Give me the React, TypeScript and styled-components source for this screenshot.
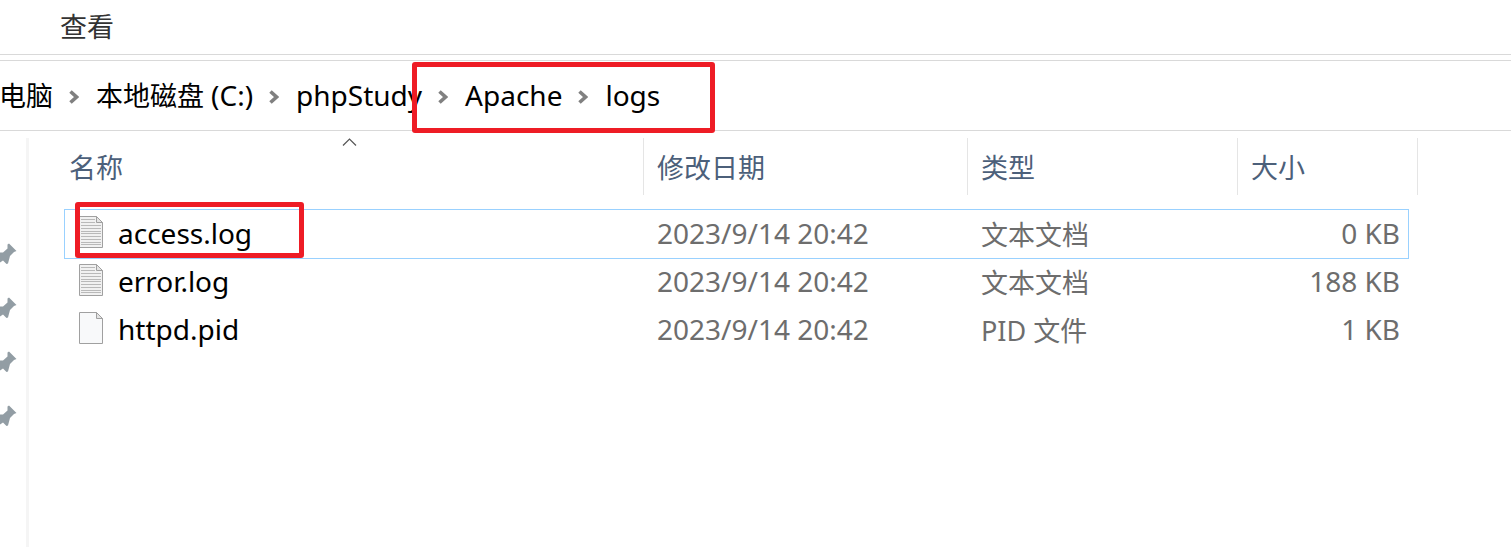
import React from "react";
import styled, { createGlobalStyle, css } from "styled-components";

const GlobalStyle = createGlobalStyle`
  *, *::before, *::after { box-sizing: border-box; }
  body {
    margin: 0;
    background: #fff;
    color: #000;
    font-family: "Noto Sans", "Noto Sans CJK SC", sans-serif;
    font-size: 27px;
    line-height: 36px;
  }
`;

const Window = styled.div`
  display: flex;
  flex-direction: column;
  min-height: 100vh;
  overflow: hidden;
`;

const TabBar = styled.nav`
  display: flex;
  align-items: center;
  height: 55px;
  padding-left: 60px;
  border-bottom: 1px solid #d9d9d9;
`;

const Tab = styled.button`
  padding: 0;
  border: 0;
  background: none;
  color: #333;
  font: inherit;
`;

const AddressBar = styled.nav`
  display: flex;
  align-items: center;
  height: 71px;
  margin-top: 5px;
  border-top: 1px solid #d9d9d9;
  border-bottom: 1px solid #d9d9d9;
  white-space: nowrap;
`;

const Crumb = styled.a<{ $clipped?: boolean }>`
  color: #000;
  text-decoration: none;
  margin-left: ${(p) => (p.$clipped ? "-1px" : "0")};
`;

const Latin = styled.span`
  font-size: 28px;
`;

const Separator = styled.svg`
  flex: none;
  width: 10px;
  height: 14px;
  margin: 2px 17px 0 16px;
`;

const highlight = css`
  content: "";
  position: absolute;
  border: 5px solid #ee1c25;
  border-radius: 3px;
  pointer-events: none;
`;

const MarkedCrumbs = styled.span`
  position: relative;
  display: flex;
  align-items: center;

  &::after {
    ${highlight}
    inset: -15px -55px -19px -10px;
  }
`;

const Body = styled.div`
  display: flex;
  flex: 1;
  padding-top: 7px;
`;

const Sidebar = styled.aside`
  flex: none;
  display: flex;
  flex-direction: column;
  gap: 32px;
  width: 29px;
  padding-top: 105px;
  border-right: 3px solid #f5f5f5;
`;

const Pin = styled.svg`
  width: 17px;
  height: 22px;
`;

const Files = styled.table`
  display: block;
  flex: 1;
  margin: 0 93px 0 35px;
`;

const Head = styled.thead`
  display: block;
  margin-bottom: 15px;
`;

const Rows = styled.tbody`
  display: block;
  margin: 0 10px 0 1px;
`;

const HeadRow = styled.tr`
  display: grid;
  grid-template-columns: minmax(0, 1fr) 324px 270px 180px;
`;

const Heading = styled.th`
  position: relative;
  height: 57px;
  padding: 12px 13px 0 13px;
  border-right: 1px solid #e5e5e5;
  color: #4c607a;
  font-weight: 400;
  text-align: left;

  &:first-child {
    padding-left: 5px;
  }
`;

const SortMark = styled.svg`
  position: absolute;
  top: 0;
  left: calc(50% - 12px);
  width: 15px;
  height: 9px;
`;

const Row = styled.tr<{ $selected: boolean }>`
  display: grid;
  grid-template-columns: minmax(0, 1fr) 324px 270px 170px;
  align-items: center;
  height: 48px;
  outline: ${(p) => (p.$selected ? "1px solid #99d1ff" : "none")};
`;

const Cell = styled.td`
  padding: 0 13px 2px;
  color: #6d6d6d;
  font-size: 28px;
  white-space: nowrap;
`;

const TypeCell = styled(Cell)`
  padding: 2px 13px 0;
  font-size: 27px;
`;

const SizeCell = styled(Cell)`
  padding: 0 8px 2px;
  text-align: right;
`;

const NameCell = styled(Cell)<{ $marked: boolean }>`
  position: relative;
  display: flex;
  align-items: center;
  gap: 14px;
  padding-left: 12px;
  color: #000;

  ${(p) =>
    p.$marked &&
    css`
      &::after {
        ${highlight}
        top: -13px;
        left: 10px;
        width: 229px;
        height: 56px;
      }
    `}
`;

const FileSvg = styled.svg`
  flex: none;
  width: 26px;
  height: 34px;
  margin: 0 0 2px 1px;
`;

function Chevron() {
  return (
    <Separator viewBox="0 0 10 14" aria-hidden="true">
      <path d="M1.5 1.5 L7.5 7 L1.5 12.5" fill="none" stroke="#808080" strokeWidth="3.6" />
    </Separator>
  );
}

function FileIcon({ lined }: { lined: boolean }) {
  const lines = [4, 7, 10, 13, 16, 18, 21, 24, 27, 29];
  return (
    <FileSvg viewBox="0 0 26 34" aria-hidden="true">
      <path d="M1.5 1.5 H18.5 L24.5 7.5 V32.5 H1.5 Z" fill={lined ? "#f1f1f1" : "#f8f9fa"} stroke="#a0a0a0" />
      {lined &&
        lines.map((y) => (
          <path key={y} d={`M3 ${y}.5 H${y < 9 ? 17 : 23}`} stroke="#b9b9b9" />
        ))}
      <path d="M18.5 1.5 V7.5 H24.5 Z" fill="#e4e4e4" stroke="#a0a0a0" />
    </FileSvg>
  );
}

const files = [
  { name: "access.log", date: "2023/9/14 20:42", type: "文本文档", size: "0 KB", lined: true },
  { name: "error.log", date: "2023/9/14 20:42", type: "文本文档", size: "188 KB", lined: true },
  { name: "httpd.pid", date: "2023/9/14 20:42", type: "PID 文件", size: "1 KB", lined: false },
];

const pins = ["desktop", "downloads", "documents", "pictures"];

export default function App() {
  return (
    <Window lang="zh-CN">
      <GlobalStyle />
      <TabBar>
        <Tab type="button">查看</Tab>
      </TabBar>
      <AddressBar>
        <Crumb href="#computer" $clipped>电脑</Crumb>
        <Chevron />
        <Crumb href="#c">本地磁盘 <Latin>(C:)</Latin></Crumb>
        <Chevron />
        <Crumb href="#phpstudy"><Latin>phpStudy</Latin></Crumb>
        <MarkedCrumbs>
          <Chevron />
          <Crumb href="#apache"><Latin>Apache</Latin></Crumb>
          <Chevron />
          <Crumb href="#logs"><Latin>logs</Latin></Crumb>
        </MarkedCrumbs>
      </AddressBar>
      <Body>
        <Sidebar>
          {pins.map((id) => (
            <Pin key={id} viewBox="0 0 17 22" aria-hidden="true">
              <path
                d="M9 .5 L16.5 8 L14 9 L10 13 L8 20.5 L6.5 21 L3 17.5 L0 19.5 V9.5 L3 9.5 L7.5 5.5 L7.5 1.5 Z"
                fill="#929da4"
              />
            </Pin>
          ))}
        </Sidebar>
        <Files>
          <Head>
            <HeadRow>
              <Heading scope="col">
                名称
                <SortMark viewBox="0 0 15 9" aria-hidden="true">
                  <path d="M1 7.5 L7.5 1 L14 7.5" fill="none" stroke="#555" strokeWidth="1.2" />
                </SortMark>
              </Heading>
              <Heading scope="col">修改日期</Heading>
              <Heading scope="col">类型</Heading>
              <Heading scope="col">大小</Heading>
            </HeadRow>
          </Head>
          <Rows>
            {files.map((file, i) => (
              <Row key={file.name} $selected={i === 0}>
                <NameCell $marked={i === 0}>
                  <FileIcon lined={file.lined} />
                  {file.name}
                </NameCell>
                <Cell>{file.date}</Cell>
                <TypeCell>{file.type}</TypeCell>
                <SizeCell>{file.size}</SizeCell>
              </Row>
            ))}
          </Rows>
        </Files>
      </Body>
    </Window>
  );
}
